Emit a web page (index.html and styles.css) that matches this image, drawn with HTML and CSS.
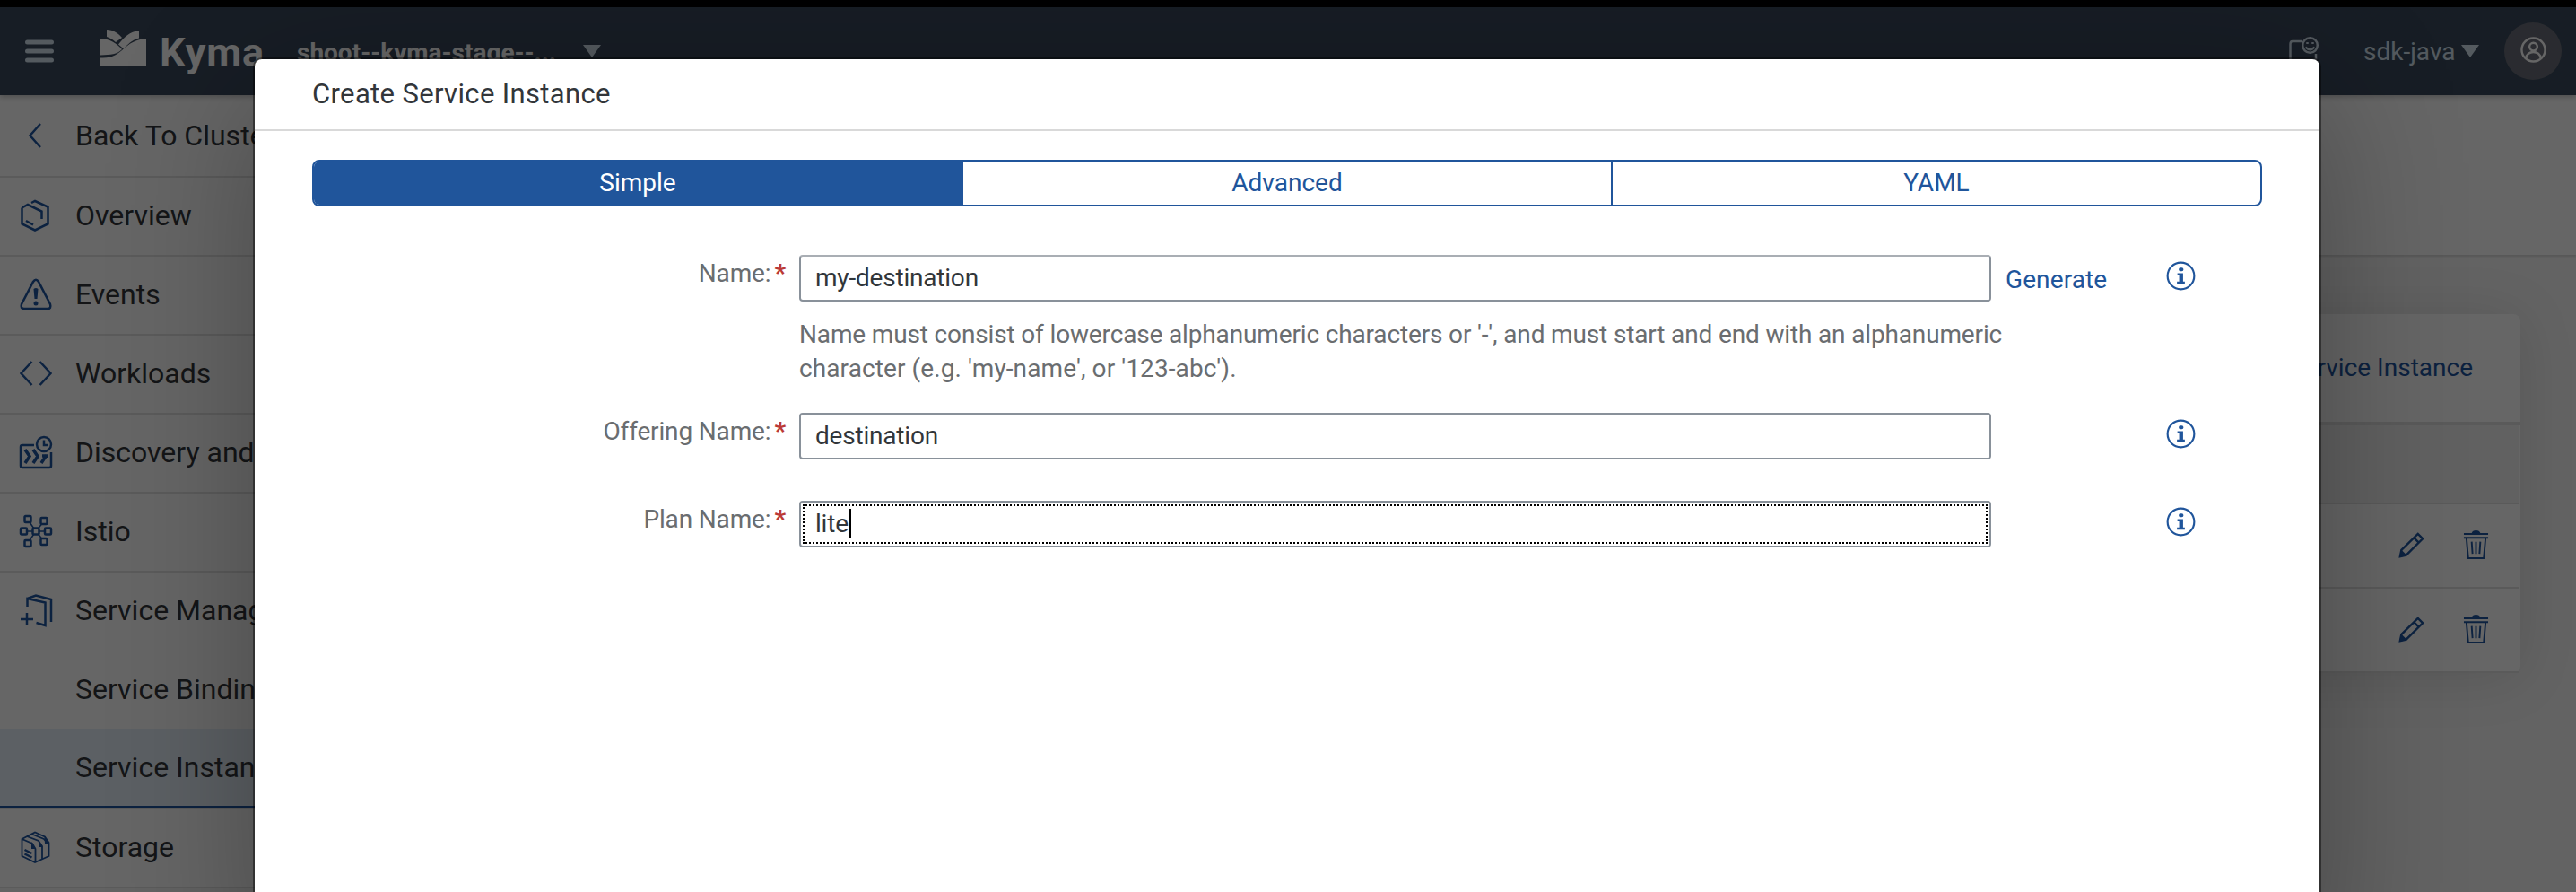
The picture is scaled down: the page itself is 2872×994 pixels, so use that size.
FILE: index.html
```html
<!DOCTYPE html>
<html lang="en">
<head>
<meta charset="utf-8">
<title>Kyma</title>
<link rel="stylesheet" href="styles.css">
</head>
<body>
<div class="app">
  <header class="shellbar">
    <svg class="menu" viewBox="0 0 34 34"><path d="M3.500 7h27M3.500 17h27M3.500 27h27" /></svg>
    <svg class="logo" viewBox="0 0 51 42"><path d="M0 10C10 10 18 15 24 22C18 28 12 28 0 28.500Z"/><path d="M0 31.500C26 33 24 12 51 10V41H0Z"/><path d="M7 0C14 0 20 4 24 9L17 14C14 11 10 9 7 8Z"/><path d="M43 1V9.500C34 12 30 17 26 21.500L20 16.500C26 9 33 2 43 1Z"/></svg>
    <span class="brand">Kyma</span>
    <span class="cluster">shoot--kyma-stage--...</span>
    <svg class="arrow arrow-cluster" viewBox="0 0 20 14"><path d="M0 0H20L10 14Z"/></svg>
    <svg class="feedback" viewBox="0 0 34 32"><path d="M14 5H4Q1.500 5 1.500 8V26H30V19"/><circle cx="23.500" cy="9.500" r="8.300"/><path d="M18.500 11.500Q23.500 17 28.500 11.500"/><path d="M20.500 6v2M26.500 6v2"/></svg>
    <span class="user">sdk-java</span>
    <svg class="arrow" viewBox="0 0 20 14"><path d="M0 0H20L10 14Z"/></svg>
    <span class="avatar"><svg viewBox="0 0 30 30"><circle cx="15" cy="15" r="13.500"/><circle cx="15" cy="11.500" r="4.500"/><path d="M6.500 25C7 15 23 15 23.500 25"/></svg></span>
  </header>
  <div class="body">
    <nav class="sidebar">
      <div class="item first"><svg class="back" viewBox="0 0 36 36"><path d="M23 5L11.500 18L23 31"/></svg><span>Back To Cluster Details</span></div>
      <div class="item"><svg viewBox="0 0 36 36"><path d="M2.500 9.500L9 6L24.500 13.500V22M2.500 9.500V27.500L17 34.500L31.500 27.500V8.500L17 2L13 4M7 24L15 28.500"/></svg><span>Overview</span></div>
      <div class="item"><svg viewBox="0 0 36 36"><path d="M15 4Q18 -.5 21 4L34 29Q35.500 34 31 34H5Q.5 34 2 29Z"/><path class="fill" d="M15.500 12Q18 10 20.500 12L19.500 23H16.500Z"/><circle class="fill" cx="18" cy="28" r="2.500"/></svg><span>Events</span></div>
      <div class="item"><svg viewBox="0 0 36 36"><path d="M13.500 5L1.500 18L13.500 31M22.500 5L34.500 18L22.500 31"/></svg><span>Workloads</span></div>
      <div class="item"><svg viewBox="0 0 36 36"><path d="M16 10H3Q1 10 1 12V33Q1 35 3 35H33Q35 35 35 33V18"/><circle cx="27" cy="9" r="8"/><path d="M27 4.500V10H31"/><path class="bold" d="M6 15L11 22.500L6 30M15 15L20 22.500L15 30M30 21L24 30M25 22H30V24"/></svg><span>Discovery and Network</span></div>
      <div class="item"><svg class="net" viewBox="0 0 36 36"><path class="thin" d="M18 18L9 5M18 18L27 7M18 18L9 31M18 18L27 29M5 18H31"/><g><rect x="5.500" y="1" width="7" height="7" rx="1"/><rect x="23.500" y="3" width="7" height="7" rx="1"/><rect x="1" y="14.500" width="7" height="7" rx="1"/><rect x="14.500" y="14.500" width="7" height="7" rx="1"/><rect x="28" y="14.500" width="7" height="7" rx="1"/><rect x="5.500" y="28" width="7" height="7" rx="1"/><rect x="23.500" y="26" width="7" height="7" rx="1"/></g></svg><span>Istio</span></div>
      <div class="item open"><svg viewBox="0 0 36 36"><path d="M8.500 14V5L28.500 9.500V35L18.500 32M8.500 5L18 1.500L35 6V31M8 21V35M1 28H15"/></svg><span>Service Management</span></div>
      <div class="item sub"><span>Service Bindings</span></div>
      <div class="item sub selected"><span>Service Instances</span></div>
      <div class="item"><svg class="files" viewBox="0 0 36 36"><path d="M2.500 9L17 1.500L28 6.500L32.500 13V28L17 35L2.500 28Z M2.500 9L14 14L17.500 20V34.500M8 6L21 11L25 17V31.500M13.500 3.500L27 9L32 14"/><path class="bar" d="M5.500 21L13.500 25M5.500 25.500L13.500 29.500"/><path class="fill" d="M13 12L18 20H13Z M21 10L25.500 18H21Z M27.500 6L32.500 14H28Z"/></svg><span>Storage</span></div>
    </nav>
    <main class="content">
      <div class="page-head"></div>
      <section class="panel">
        <div class="panel-head">Create Service Instance</div>
        <div class="table">
          <div class="table-head"></div>
          <div class="row"><svg class="pencil" viewBox="0 0 30 30"><path d="M2 28L3.500 20.500L22.500 2L28 7.500L9 26.500ZM18 6.500L23.500 12"/><path class="fill" d="M1 29L3 20L10 27Z"/></svg><svg class="trash" viewBox="0 0 30 34"><path d="M1 4H29M1 8.500H29M4 9L6 32H24L26 9M10 13L11 27M15 13V27M20 13L19 27"/><path class="fill" d="M10 3Q11 0 15 0Q19 0 20 3Z"/></svg></div>
          <div class="row"><svg class="pencil" viewBox="0 0 30 30"><path d="M2 28L3.500 20.500L22.500 2L28 7.500L9 26.500ZM18 6.500L23.500 12"/><path class="fill" d="M1 29L3 20L10 27Z"/></svg><svg class="trash" viewBox="0 0 30 34"><path d="M1 4H29M1 8.500H29M4 9L6 32H24L26 9M10 13L11 27M15 13V27M20 13L19 27"/><path class="fill" d="M10 3Q11 0 15 0Q19 0 20 3Z"/></svg></div>
        </div>
      </section>
    </main>
  </div>
</div>
<div class="overlay">
  <div class="dialog" role="dialog">
    <h1 class="title">Create Service Instance</h1>
    <div class="segments">
      <div class="segment active">Simple</div>
      <div class="segment">Advanced</div>
      <div class="segment">YAML</div>
    </div>
    <div class="form">
      <div class="field">
        <label>Name:<b>*</b></label>
        <div class="input light">my-destination</div>
        <a class="generate">Generate</a>
        <svg class="info" viewBox="0 0 34 34"><circle cx="17" cy="17" r="15.300"/><path d="M16.500 7.500h1.500a2 2 0 0 1 0 4h-1.500a2 2 0 0 1 0-4ZM13 14h6.500v9.500h2V26h-9v-2.500h2.500v-7H13Z"/></svg>
      </div>
      <p class="help"><span class="help-rule">Name must consist of lowercase alphanumeric characters or '-', and must start and end with an alphanumeric</span><br><span class="help-example">character (e.g. 'my-name', or '123-abc').</span></p>
      <div class="field">
        <label>Offering Name:<b>*</b></label>
        <div class="input">destination</div>
        <svg class="info" viewBox="0 0 34 34"><circle cx="17" cy="17" r="15.300"/><path d="M16.500 7.500h1.500a2 2 0 0 1 0 4h-1.500a2 2 0 0 1 0-4ZM13 14h6.500v9.500h2V26h-9v-2.500h2.500v-7H13Z"/></svg>
      </div>
      <div class="field plan">
        <label>Plan Name:<b>*</b></label>
        <div class="input focused"><span>lite</span><i class="caret"></i></div>
        <svg class="info" viewBox="0 0 34 34"><circle cx="17" cy="17" r="15.300"/><path d="M16.500 7.500h1.500a2 2 0 0 1 0 4h-1.500a2 2 0 0 1 0-4ZM13 14h6.500v9.500h2V26h-9v-2.500h2.500v-7H13Z"/></svg>
      </div>
    </div>
  </div>
</div>
</body>
</html>
```
FILE: styles.css
```css
* { box-sizing: border-box; }
html, body { margin: 0; height: 994px; overflow: hidden; }
body { font-family: Roboto, "Noto Sans", sans-serif; font-size: 28px; color: #32363a; }
svg { display: block; flex: none; fill: none; stroke: currentColor; stroke-width: 2.5; overflow: visible; }
svg .fill { fill: currentColor; stroke: none; }

.app { height: 994px; display: flex; flex-direction: column; border-top: 8px solid #000; background: #f7f7f7; }
.shellbar { flex: none; height: 98px; display: flex; align-items: center; background: #3a4a5c; padding: 0 16px 0 27px; color: #d1e0ee; position: relative; box-shadow: 0 2px 6px rgba(0,0,0,.25); }
.menu { width: 34px; height: 34px; stroke-width: 5; stroke-linecap: round; }
.logo { width: 51px; height: 42px; margin: -7px 0 0 51px; fill: #fff; stroke: none; }
.brand { margin-left: 15px; width: 118px; font-weight: 700; font-size: 45px; letter-spacing: .9px; color: #fff; padding-top: 2px; }
.cluster { margin-left: 35px; width: 319px; font-weight: 700; font-size: 28px; color: #fff; white-space: nowrap; padding-top: 2px; }
.arrow { width: 20px; height: 14px; fill: currentColor; stroke: none; }
.feedback { width: 34px; height: 32px; margin-left: auto; }
.user { margin-left: 49px; width: 102px; font-size: 28px; white-space: nowrap; }
.user + .arrow { margin-left: 7px; }
.avatar { margin-left: 28px; width: 64px; height: 64px; border-radius: 50%; background: #6a6d78; color: #fff; display: flex; align-items: center; justify-content: center; padding-bottom: 4px; }
.avatar svg { width: 29px; height: 29px; }

.body { flex: 1; display: flex; min-height: 0; }
.sidebar { width: 480px; flex: none; background: #fff; color: #32363a; font-size: 32px; height: 884px; }
.item { height: 88px; display: flex; align-items: center; padding: 0 0 2px 22px; border-bottom: 2px solid #e4e4e4; white-space: nowrap; }
.item svg { width: 36px; height: 36px; margin-right: 26px; color: #1f55a0; }
.item.first { height: 92px; padding-bottom: 0; }
.item.open { border-color: transparent; }
.item.sub { height: 86px; padding: 0 0 3px 84px; border: 0; }
.item.selected { height: 90px; background: #e5f0fa; border-bottom: 2px solid #e4e4e4; box-shadow: inset 0 -2px #1f55a0; }
svg .bold { stroke-width: 3.5; }
svg .bar { stroke-width: 2.5; }
svg .thin { stroke-width: 1.5; }
.net rect { fill: #fff; }
.files { stroke-width: 1.8; }

.content { flex: 1; }
.page-head { height: 178px; background: #fff; box-shadow: 0 2px 2px rgba(0,0,0,.12); }
.panel { margin: 66px 62px 0 64px; border-radius: 8px; background: #fff; box-shadow: 0 4px 64px rgba(0,0,0,.12); color: #1f55a0; }
.panel-head { height: 124px; border-bottom: 4px solid #e2e2e2; display: flex; align-items: center; justify-content: flex-end; padding: 0 53px 2px 0; }
.table { margin-right: 2px; }
.table-head { height: 88px; background: #f2f2f2; border-bottom: 2px solid #e2e2e2; }
.row { height: 94px; border-bottom: 2px solid #e2e2e2; display: flex; align-items: center; justify-content: flex-end; padding: 0 33px 2px 0; gap: 43px; }
.pencil { width: 29px; height: 29px; }
.trash { width: 29px; height: 33px; stroke-width: 2; }

.overlay { position: absolute; inset: 0; background: rgba(0,0,0,.6); overflow: hidden; }
.dialog { margin: 66px 286px 0 284px; height: 1000px; background: #fff; border-radius: 8px; box-shadow: 0 0 0 2px rgba(0,0,0,.42), 0 40px 160px rgba(0,0,0,.3); }
.title { margin: 0; height: 80px; border-bottom: 2px solid #d9d9d9; padding: 0 64px; font-size: 31px; letter-spacing: .35px; font-weight: 400; line-height: 78px; }
.segments { margin: 32px 64px 0; height: 52px; display: flex; border: 2px solid #20559b; border-radius: 8px; color: #20559b; overflow: hidden; }
.segment { flex: 1; display: flex; align-items: center; justify-content: center; padding-bottom: 2px; }
.segment + .segment { border-left: 2px solid #20559b; }
.segment.active { background: #20559b; color: #fff; }
.form { margin-top: 54px; color: #6a6d70; }
.field { display: flex; height: 52px; }
.field label { width: 592px; margin-right: 15px; text-align: right; line-height: 42px; letter-spacing: -.15px; white-space: nowrap; }
.field label b { color: #bb3a35; margin-left: 4px; }
.input { width: 1329px; height: 52px; border: 2px solid #89919a; border-radius: 4px; padding-left: 16px; line-height: 48px; letter-spacing: -.2px; color: #32363a; display: flex; }
.input.light { border-top-color: #a9aeb4; }
.input.focused { outline: 2px dotted #000; outline-offset: -6px; }
.caret { width: 2px; height: 32px; background: #000; margin: 7px 0 0 1px; }
.generate { color: #20559b; line-height: 56px; width: 114px; margin-left: 16px; letter-spacing: .1px; }
.info { width: 33px; height: 33px; margin: 7px 138px 0 auto; color: #20559b; stroke-width: 2.2; }
.info path { fill: currentColor; stroke: none; }
.help { margin: 18px 0 28px 607px; height: 78px; line-height: 38px; white-space: nowrap; }
.help-rule { letter-spacing: -.15px; }
.help-example { letter-spacing: .1px; }
.plan { margin-top: 46px; }
```
